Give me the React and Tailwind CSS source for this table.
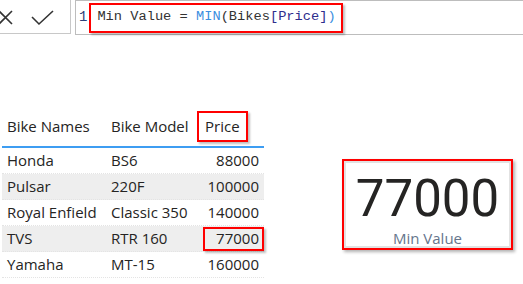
import React from 'react';

const rows = [
  { name: 'Honda', model: 'BS6', price: '88000' },
  { name: 'Pulsar', model: '220F', price: '100000' },
  { name: 'Royal Enfield', model: 'Classic 350', price: '140000' },
  { name: 'TVS', model: 'RTR 160', price: '77000', mark: true },
  { name: 'Yamaha', model: 'MT-15', price: '160000' },
];

const ui = { fontFamily: '"Segoe UI", "Open Sans", "Noto Sans", sans-serif' };
const mono = { fontFamily: '"Liberation Mono", "DejaVu Sans Mono", monospace' };

const FormulaBar = () => (
  <div className="flex h-[35px] bg-white">
    <div className="flex items-center w-[71px] h-[34px] border-r border-b border-[#c8c8c8] shrink-0">
      <svg width="16" height="18" viewBox="0 0 16 18" className="ml-[-2px]">
        <path d="M1 3 L14 16 M14 3 L1 16" stroke="#333" strokeWidth="1.6" fill="none" />
      </svg>
      <svg width="24" height="16" viewBox="0 0 24 16" className="ml-[17px] mt-[3px]">
        <path d="M1 7 L8 14 L22 1" stroke="#333" strokeWidth="1.6" fill="none" />
      </svg>
    </div>
    <div className="w-[4px]" />
    <div className="flex items-center flex-1 h-[35px] border-l border-t border-b border-[#bdbdbd]">
      <span className="ml-[3px] text-[#2b3f7a] text-[14px]" style={mono}>1</span>
      <div className="ml-[2px] flex items-center h-[30px] pl-[6px] pr-[5px] border-2 border-[#f00] shadow-[2px_2px_2px_rgba(0,0,0,0.25)] text-[13.7px] whitespace-pre" style={mono}>
        <span className="text-[#333]">Min Value = </span>
        <span className="text-[#3b8ee0]">MIN</span>
        <span className="text-[#333]">(Bikes</span>
        <span className="text-[#2d2d8c]">[Price]</span>
        <span className="text-[#3b8ee0]">)</span>
      </div>
    </div>
  </div>
);

const Table = () => (
  <div className="ml-[2px] mt-[75px] w-[262px] text-[15px] text-[#252423]" style={ui}>
    <div className="grid grid-cols-[105px_90px_67px] h-[38px] items-center pb-[3px] border-b-2 border-[#3d9df2]">
      <div className="pl-[5px]">Bike Names</div>
      <div className="pl-[4px]">Bike Model</div>
      <div className="flex items-center h-[31px] border-2 border-[#f00] shadow-[2px_2px_2px_rgba(0,0,0,0.25)] pl-[6px] w-[51px] mb-[1px]">Price</div>
    </div>
    {rows.map((r, i) => (
      <div
        key={i}
        className={`grid grid-cols-[105px_90px_67px] h-[26px] items-center border-b border-dotted border-[#e4e4e4] ${i % 2 === 1 ? 'bg-[#eeeeee]' : 'bg-white'}`}
      >
        <div className="pl-[5px] whitespace-nowrap">{r.name}</div>
        <div className="pl-[4px] whitespace-nowrap">{r.model}</div>
        {r.mark ? (
          <div className="flex justify-end ml-[6px] h-[24px] items-center border-2 border-[#f00] shadow-[2px_2px_2px_rgba(0,0,0,0.25)] pr-[3px]">{r.price}</div>
        ) : (
          <div className="text-right pr-[5px]">{r.price}</div>
        )}
      </div>
    ))}
  </div>
);

const Card = () => (
  <div className="ml-[78px] mt-[124px] w-[171px] h-[91px] border-2 border-[#f00] shadow-[2px_2px_3px_rgba(0,0,0,0.3)] bg-white">
    <div className="flex flex-col items-center h-full border-2 border-[#e2e2e2]">
      <div className="text-[51px] leading-none mt-[10px] text-[#252423]" style={{ fontFamily: '"Roboto", "Open Sans", sans-serif' }}>77000</div>
      <div className="text-[15px] leading-none mt-[7px] text-[#66758c]" style={ui}>Min Value</div>
    </div>
  </div>
);

export default function App() {
  return (
    <div className="w-[523px] h-[284px] bg-white overflow-hidden">
      <FormulaBar />
      <div className="flex">
        <Table />
        <Card />
      </div>
    </div>
  );
}
